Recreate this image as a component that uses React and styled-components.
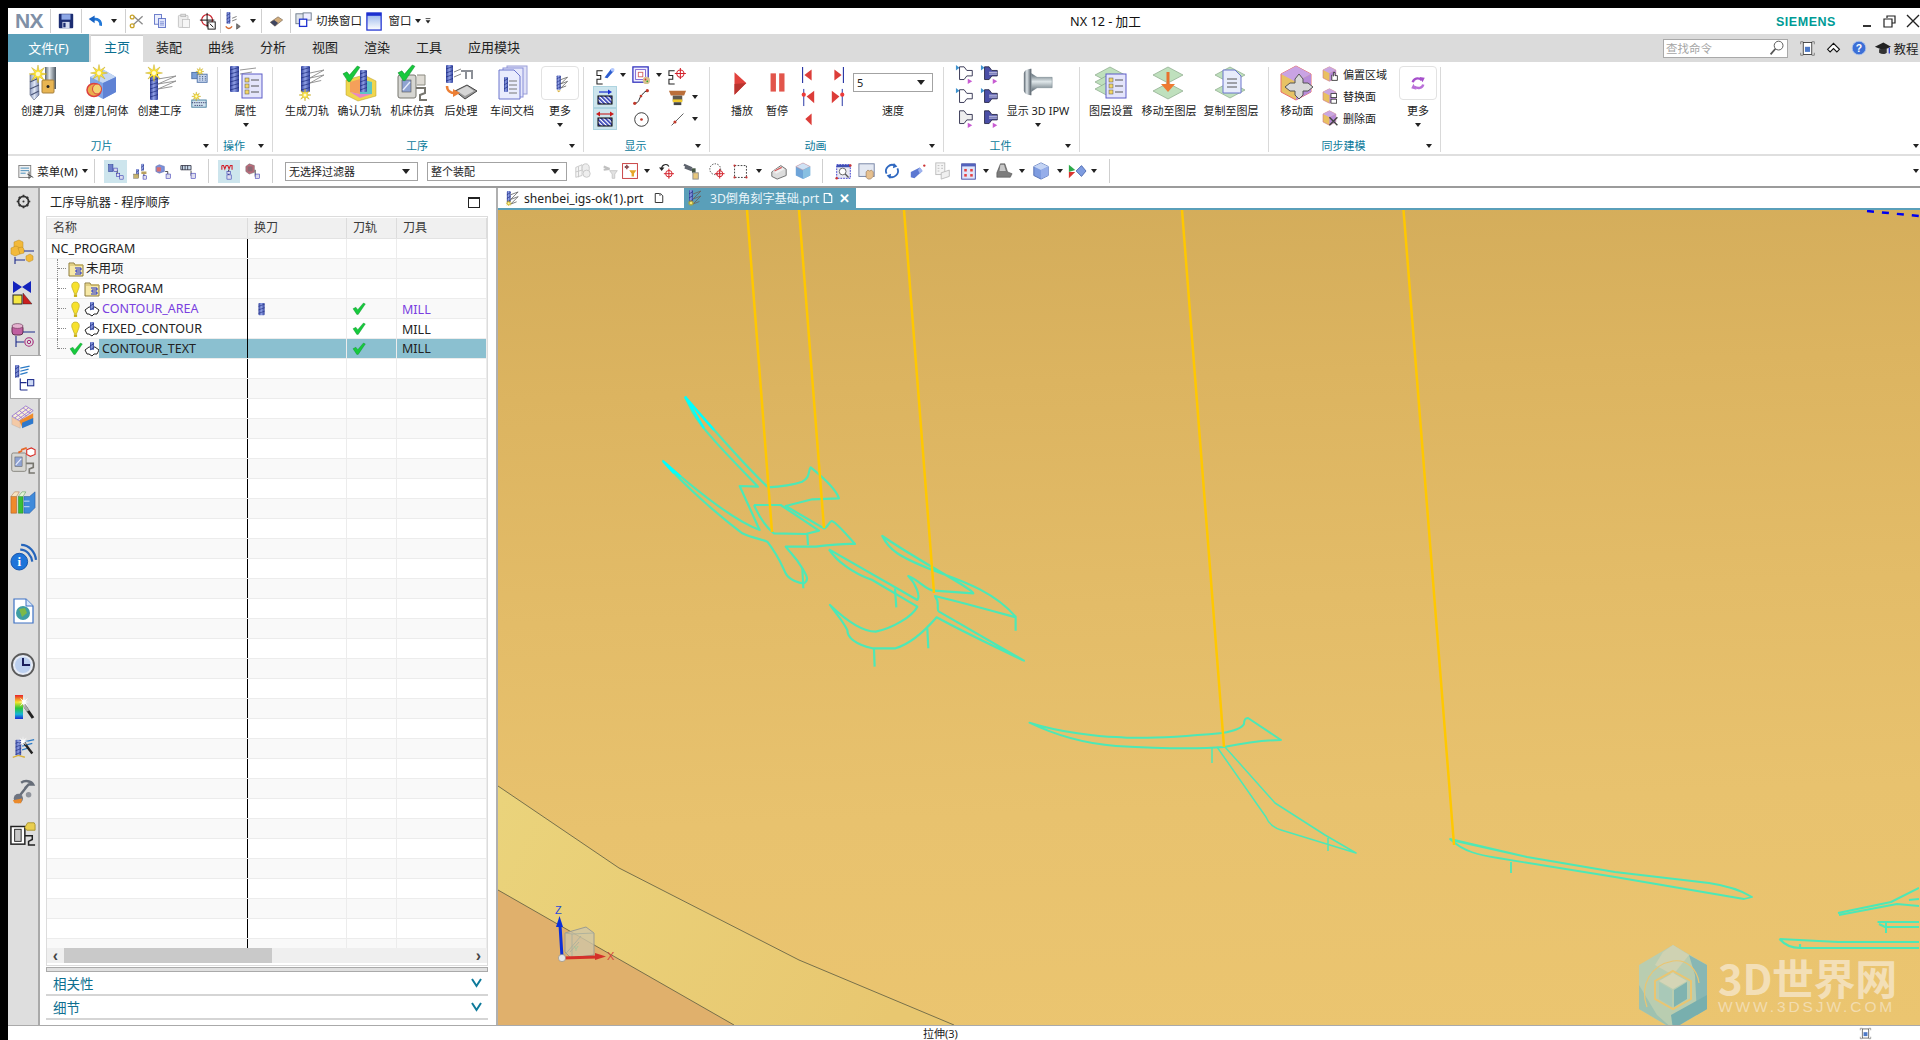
import React from 'react';
import styled, { createGlobalStyle } from 'styled-components';

const FONT = '"Noto Sans", "Noto Sans CJK SC", sans-serif';

const Global = createGlobalStyle`
  html, body { margin: 0; padding: 0; background: #000; }
  * { box-sizing: border-box; }
  #root { width: 1920px; height: 1040px; overflow: hidden; }
`;

/* ---------- drawing helpers ---------- */
const starPts = (cx, cy, R, r, n = 8) =>
  Array.from({ length: n * 2 }, (_, i) => {
    const a = (Math.PI * i) / n - Math.PI / 2;
    const q = i % 2 ? r : R;
    return `${(cx + q * Math.cos(a)).toFixed(1)},${(cy + q * Math.sin(a)).toFixed(1)}`;
  }).join(' ');
const Star = ({ x, y, R = 8 }) => (
  <g>
    <polygon points={starPts(x, y, R, R * 0.36)} fill="#ffe63a" stroke="#b59a10" strokeWidth=".4" />
    <circle cx={x} cy={y} r={R * 0.25} fill="#fffbd0" />
  </g>
);
const Mill = ({ x, y, w = 8, h = 26 }) => (
  <g>
    <rect x={x} y={y} width={w} height={h} rx="1" fill="url(#gMill)" />
    {Array.from({ length: Math.floor(h / 4) }, (_, i) => (
      <path key={i} d={`M${x} ${y + 4 + i * 4}L${x + w} ${y + 1.5 + i * 4}`} stroke="#1b2a7c" strokeWidth=".9" opacity=".75" />
    ))}
  </g>
);
const Check = ({ x, y, s = 1 }) => (
  <path transform={`translate(${x} ${y}) scale(${s})`} d="M0 6L3 4.5L5 7L11 0L13 1L5.5 12L4 12Z" fill="#17c93d" stroke="#0b8a2a" strokeWidth=".4" />
);
const Fan = ({ x, y, l = 14, c = '#8b8b8b' }) => (
  <path d={`M${x} ${y}L${x + l} ${y - 3}M${x} ${y + 5}L${x + l} ${y + 2}M${x} ${y + 10}L${x + l * 0.8} ${y + 7.5}M${x + l} ${y - 3}L${x} ${y + 5}M${x + l} ${y + 2}L${x} ${y + 10}`} stroke={c} strokeWidth=".9" fill="none" />
);
const Mini = ({ x = 0, y = 0, s = 1 }) => (
  <g transform={`translate(${x} ${y}) scale(${s})`}>
    <polygon points="8,0 16,4 16,14 8,18 0,14 0,4" fill="#e9c061" stroke="#c9708a" strokeWidth=".7" />
    <polygon points="8,0 16,4 8,8 0,4" fill="#c9a6e2" />
    <polygon points="8,8 16,4 16,14 8,18" fill="#b78ad8" />
  </g>
);
const Cup = ({ x = 0, y = 0, fill = '#fff', left, right }) => (
  <g transform={`translate(${x} ${y})`}>
    {left && <polygon points="0,0 4,3 0,6" fill="#3f93cf" />}
    <path d="M4 2H9L12 6H18V12H12L9 16H4Z" fill={fill} stroke="#2d2d4c" strokeWidth="1" />
    {fill !== '#fff' && fill !== '#eee' && <path d="M9 8H18M9 10H18" stroke="#fff" strokeWidth=".8" />}
    {right && <polygon points="13,15 18,18 13,21" fill="#c75bd1" />}
  </g>
);
const Xi = ({ x = 0, y = 4 }) => (
  <path transform={`translate(${x} ${y})`} d="M7 1H1V6H5V10H1V15H7" fill="none" stroke="#222" strokeWidth="1.1" />
);
const Cross = ({ x, y, r = 4.5 }) => (
  <g stroke="#d3202a" strokeWidth="1.1" fill="none">
    <circle cx={x} cy={y} r={r} />
    <path d={`M${x - r - 2} ${y}H${x + r + 2}M${x} ${y - r - 2}V${y + r + 2}`} />
  </g>
);
const Machine = ({ x = 0, y = 0, s = 1 }) => (
  <g transform={`translate(${x} ${y}) scale(${s})`}>
    <rect x="1" y="4" width="18" height="23" rx="2" fill="#d6d6d2" stroke="#77766f" />
    <rect x="5" y="9" width="9" height="12" fill="#8fa3d2" stroke="#555" strokeWidth=".6" />
    <path d="M6 19L13 11" stroke="#e8eefc" strokeWidth="1.4" />
    <path d="M19 17H28V22L23 24V29H30" fill="none" stroke="#77766f" strokeWidth="2" />
  </g>
);
const Plane = ({ y = 0, c = '#bfe0bd' }) => (
  <polygon points={`2,${y + 8} 17,${y} 32,${y + 8} 17,${y + 16}`} fill={c} stroke="#8aa88a" strokeWidth=".7" />
);

const G = (vb, el) => ({ vb, el });
const glyphs = {
  /* quick access */
  save: G(20, <><rect x="2" y="2" width="16" height="16" rx="1" fill="#1c2d72" /><rect x="5" y="2.5" width="10" height="6" fill="#8ea8e6" /><rect x="6" y="11" width="8" height="7" fill="#d4dcf0" /><rect x="7" y="12" width="2.5" height="5" fill="#1c2d72" /></>),
  undo: G(20, <><path d="M16 15C17 9 12 5.5 6 8" fill="none" stroke="#2278d8" strokeWidth="3.2" /><polygon points="2,7 9,3 9,12" fill="#1763c4" /></>),
  cut: G(20, <><path d="M5 15L17 4M6 4L17 14" stroke="#8a8a8a" strokeWidth="1.6" /><circle cx="4" cy="16" r="2.4" fill="none" stroke="#c9a328" strokeWidth="1.6" /><circle cx="5" cy="8" r="2.4" fill="none" stroke="#c9a328" strokeWidth="1.6" transform="translate(-1 -3)" /></>),
  copy: G(20, <><rect x="3" y="2" width="9" height="12" fill="#eaeefc" stroke="#4e63c0" /><rect x="8" y="7" width="9" height="11" fill="#dfe5fb" stroke="#4e63c0" /><path d="M10 11H15M10 13H15M10 15H15" stroke="#4e63c0" strokeWidth=".7" /></>),
  paste: G(20, <><rect x="3" y="3" width="12" height="15" rx="1" fill="#eee" stroke="#bbb" /><rect x="6" y="1.5" width="6" height="3" fill="#ddd" stroke="#bbb" /><rect x="8" y="8" width="9" height="10" fill="#f6f6f6" stroke="#c2c2c2" /></>),
  snap: G(20, <><circle cx="9" cy="9" r="6" fill="none" stroke="#c81e28" strokeWidth="1.3" /><path d="M1 9H17M9 1V17" stroke="#111" strokeWidth="1.1" /><rect x="10" y="11" width="8" height="8" fill="#fff" stroke="#000" /><path d="M12 13L16 17" stroke="#000" /></>),
  tool: G(22, <><Mill x={4} y={1} w={4} h={13} /><path d="M10 8L15 6M10 11L15 9M15 14L19 17L15 20Z" stroke="#555" fill="#777" strokeWidth=".8" /><path d="M3 17C5 20 8 20 10 17" stroke="#d5662a" strokeWidth="1.4" fill="none" /></>),
  erase: G(22, <><polygon points="3,12 13,5 19,9 9,17" fill="#d2ac7a" stroke="#8a7a68" /><polygon points="3,12 8,9 13,13 9,17" fill="#3f4560" /></>),
  switchWin: G(20, <><rect x="1" y="2" width="11" height="11" fill="#dfe3e9" stroke="#6a7888" /><rect x="9" y="1" width="9" height="8" fill="#eef" stroke="#6a7888" /><rect x="5" y="8" width="8" height="8" fill="#fff" stroke="#1c2fd0" strokeWidth="1.4" /></>),
  win: G(20, <><rect x="2" y="1" width="15" height="18" fill="url(#gWin)" stroke="#1c2fd0" strokeWidth="1.3" /><rect x="2" y="1" width="15" height="3" fill="#1c2fd0" /></>),
  mini: G(10, <><path d="M2 2H8" stroke="#222" /><polygon points="2,4 8,4 5,8" fill="#222" /></>),
  /* top right */
  mag: G(20, <><circle cx="12" cy="7" r="5.5" fill="#fff" stroke="#555" strokeWidth="1.2" /><path d="M8 11L2 18" stroke="#555" strokeWidth="2.2" /></>),
  screen: G(20, <><path d="M2 5V2H5M15 2H18V5M2 15V18H5M15 18H18V15" stroke="#777" fill="none" /><rect x="5" y="3" width="10" height="14" fill="#fff" stroke="#333" /><rect x="7" y="8" width="6" height="6" fill="#4d79c7" /></>),
  chev: G(20, <><path d="M3 11L10 4L17 11L14 14L10 10L6 14Z" fill="#fff" stroke="#111" strokeWidth="1.3" /></>),
  help: G(20, <><circle cx="10" cy="10" r="8.5" fill="#3c6fd6" stroke="#aac3ef" /><text x="10" y="15" textAnchor="middle" fontSize="13" fontWeight="700" fontFamily="Liberation Sans" fill="#fff">?</text></>),
  cap: G(20, <><polygon points="1,8 11,3 20,8 11,12" fill="#222" /><path d="M6 11V15C9 17 13 17 15 15V10" fill="#333" /><path d="M18 9V16" stroke="#1c2fd0" strokeWidth="1.4" /></>),
  /* ribbon big */
  createTool: G(36, <><path d="M5 10L13 8L14 30L9 35L5 30Z" fill="url(#gDrill)" stroke="#56607a" strokeWidth=".6" /><path d="M5 17L14 13M5 24L14 20M6 30L14 26" stroke="#4b5677" strokeWidth="1.2" /><rect x="20" y="2" width="11" height="22" fill="url(#gSteel)" /><rect x="17" y="15" width="12" height="13" rx="1" fill="#e8b553" stroke="#a7803c" /><circle cx="23" cy="21.5" r="1.5" fill="#222" /><Star x={13} y={9} R={9} /></>),
  createGeom: G(36, <><polygon points="7,12 21,5 33,12 33,27 20,34 7,27" fill="#7fa5e6" /><polygon points="7,12 21,5 33,12 20,18" fill="#c5d7f3" /><polygon points="20,18 33,12 33,27 20,34" fill="#5f82d4" /><ellipse cx="11" cy="25" rx="7" ry="6.5" fill="#e9ad4c" stroke="#dd3f3f" strokeWidth="1.5" /><ellipse cx="14" cy="24" rx="4.5" ry="5" fill="#f3d372" stroke="#dd3f3f" strokeWidth="1" /><Star x={16} y={8} R={8.5} /></>),
  createOp: G(36, <><Mill x={8} y={8} w={8} h={27} /><Fan x={16} y={14} l={18} /><Star x={12} y={8} R={8.5} /></>),
  attr: G(36, <><Mill x={2} y={1} w={9} h={26} /><path d="M12 5L28 3M12 9L24 7" stroke="#999" /><rect x="14" y="9" width="20" height="24" fill="#e4e5fb" stroke="#5d5dc7" /><g fill="#f2d564" stroke="#555" strokeWidth=".5"><rect x="17" y="13" width="4" height="4" /><rect x="17" y="19" width="4" height="4" /><rect x="17" y="25" width="4" height="4" /></g><path d="M23 15H31M23 21H31M23 27H31" stroke="#555" strokeWidth="1" /></>),
  genPath: G(36, <><Mill x={12} y={1} w={9} h={26} /><Fan x={21} y={8} l={14} /><Star x={16} y={30} R={6} /></>),
  verify: G(36, <><polygon points="4,15 22,10 34,16 34,31 16,36 4,30" fill="#f0d64e" stroke="#b69a2a" strokeWidth=".5" /><polygon points="8,17 18,14 18,29 8,27" fill="#f5a05a" /><polygon points="18,14 30,17 30,29 18,29" fill="#5cc4c4" /><polygon points="8,27 18,29 30,29 18,33" fill="#e886c6" /><Mill x={18} y={5} w={7} h={22} /><Check x={1} y={1} s={1.3} /></>),
  simulate: G(36, <><Machine x={2} y={6} s={1} /><path d="M22 10H30V20H22" fill="#dedbd4" stroke="#8a8a80" /><Check x={3} y={0} s={1.3} /></>),
  post: G(36, <><Mill x={3} y={0} w={7} h={18} /><path d="M11 7L18 4M11 12L18 9" stroke="#888" /><path d="M18 6H30M23 6V14M29 6V14" stroke="#8b8f96" strokeWidth="2" /><polygon points="12,26 24,20 34,26 22,34" fill="#999" stroke="#444" /><polygon points="14,26 24,21 31,26 22,31" fill="#d6d6d6" /><path d="M4 21C4 26 8 28 12 28" stroke="#ec7f35" strokeWidth="2.5" fill="none" /><polygon points="10,24 17,28 10,32" fill="#ec7f35" /></>),
  shop: G(36, <><rect x="13" y="1" width="20" height="28" fill="#dfe1f7" stroke="#9a9ed8" /><rect x="9" y="3" width="20" height="29" fill="#e6e8fb" stroke="#8a90d8" /><path d="M5 5H20L26 11V34H5Z" fill="#e9ecfd" stroke="#6a74cc" /><Mill x={10} y={12} w={4} h={15} /><path d="M15 16H23M15 20H23M15 24H23M15 28H23" stroke="#777" /></>),
  more: G(24, <><Mill x={8} y={3} w={5} h={17} /><path d="M8 21L13 21L10.5 23Z" fill="#d9b13b" /><Fan x={13} y={8} l={8} c="#555" /></>),
  /* small ribbon */
  sGrid: G(20, <><rect x="2" y="6" width="7" height="7" fill="#7ba0d8" stroke="#4c70a8" /><rect x="8" y="8" width="11" height="9" fill="#c7d5ee" stroke="#4c70a8" /><path d="M11 10V15M14 10V15M17 10V15" stroke="#23426e" strokeDasharray="1 1" /><Star x={11} y={5} R={4.5} /></>),
  sPlate: G(20, <><rect x="2" y="10" width="16" height="8" fill="#cfe2ee" stroke="#447d9e" /><path d="M2 13H18M5 16H15" stroke="#336" strokeDasharray="1.5 1" /><Star x={7} y={6} R={5} /></>),
  dispTool: G(20, <><Xi /><path d="M9 12L16 3L19 5L12 13Z" fill="#2c5dd0" /><circle cx="17.5" cy="4" r="2" fill="#b3c9ff" /></>),
  dispLayer: G(20, <><rect x="1" y="1" width="17" height="17" fill="#eef" stroke="#2f2fbd" strokeWidth="1.4" /><rect x="4" y="4" width="11" height="11" fill="#fff" stroke="#7a5ed0" /><rect x="7" y="7" width="5" height="5" fill="none" stroke="#d15e5e" /><circle cx="16" cy="16" r="4" fill="#d9c28f" /><circle cx="15" cy="15" r="1" fill="#d33" /><circle cx="17" cy="17" r="1" fill="#3a3" /></>),
  dispCross: G(20, <><Xi /><Cross x={13} y={8} r={3.8} /></>),
  hatchA: G(20, <><path d="M4 5H15" stroke="#1a2ed0" strokeWidth="1.2" /><polygon points="13,2.5 17,5 13,7.5" fill="#1a2ed0" /><rect x="3" y="9" width="14" height="8" fill="url(#hatch)" stroke="#000" /></>),
  hatchB: G(20, <><path d="M3 5H17" stroke="#c81e1e" strokeWidth="1.1" /><polygon points="5,2.5 1,5 5,7.5" fill="#c81e1e" /><polygon points="15,2.5 19,5 15,7.5" fill="#c81e1e" /><rect x="3" y="9" width="14" height="8" fill="url(#hatch)" stroke="#000" /></>),
  curve: G(20, <><path d="M3 17C8 17 8 11 10 9C12 7 13 4 17 3" stroke="#222" fill="none" strokeWidth="1.1" /><circle cx="3" cy="17" r="1.8" fill="#c0392b" /><circle cx="17" cy="3" r="1.8" fill="#c0392b" /><circle cx="10" cy="9" r="1.5" fill="#c0392b" /></>),
  circle: G(20, <><circle cx="10" cy="10" r="8" fill="#fff" stroke="#333" strokeWidth="1.1" /><circle cx="10" cy="10" r="1.6" fill="#c0392b" /></>),
  line: G(20, <><path d="M3 17L17 3" stroke="#333" strokeWidth=".9" /><circle cx="7" cy="13" r="1.8" fill="#c0392b" /></>),
  holder: G(20, <><path d="M1 3H19L17 8H3Z" fill="#bb6f3a" /><rect x="5" y="8" width="10" height="6" fill="#5f5a50" /><rect x="5" y="12" width="10" height="3" fill="#f0c92c" /><rect x="6" y="15" width="8" height="3" fill="#444" /></>),
  play: G(28, <><polygon points="7,4 18,14 7,25" fill="#e1413c" /><polygon points="7,15 18,14 7,25" fill="#b9342f" /></>),
  pause: G(28, <><rect x="8" y="5" width="5" height="17" fill="#e2554b" /><rect x="16" y="5" width="5" height="17" fill="#e2554b" /></>),
  prevBar: G(20, <><path d="M4 1V19" stroke="#1f2da0" strokeWidth="1.2" /><polygon points="14,4 6,10 14,16" fill="#dc3d39" /></>),
  nextBar: G(20, <><path d="M16 1V19" stroke="#1f2da0" strokeWidth="1.2" /><polygon points="6,4 14,10 6,16" fill="#dc3d39" /></>),
  prevDot: G(20, <><path d="M5 1V19" stroke="#1f2da0" /><circle cx="5" cy="7" r="2.2" fill="#ee3b38" /><polygon points="16,3 8,9 16,16" fill="#dc3d39" /></>),
  nextDot: G(20, <><path d="M15 1V19" stroke="#1f2da0" /><circle cx="15" cy="7" r="2.2" fill="#ee3b38" /><polygon points="4,3 12,9 4,16" fill="#dc3d39" /></>),
  prev: G(20, <polygon points="14,4 7,10 14,17" fill="#dc3d39" />),
  cupLB: G(22, <Cup x={1} y={0} left right />), cupNLB: G(22, <Cup x={1} y={0} fill="#4a4ea6" left right />),
  cupL: G(22, <Cup x={1} y={1} left />), cupNL: G(22, <Cup x={1} y={1} fill="#4a4ea6" left />),
  cupB: G(22, <Cup x={1} y={0} fill="#eee" right />), cupNB: G(22, <Cup x={1} y={0} fill="#4a4ea6" right />),
  ipw: G(36, <><path d="M3 8C3 4 9 3 11 3V31C9 31 3 30 3 26Z" fill="url(#gSteel)" /><path d="M11 8L17 12H33V23H17L11 27Z" fill="url(#gSteelV)" stroke="#6d7e88" strokeWidth=".5" /></>),
  layerSet: G(36, <><Plane y={2} /><Plane y={9} /><Plane y={16} /><rect x="13" y="9" width="20" height="24" fill="#e4e5fb" stroke="#5d5dc7" /><g fill="#f2d564" stroke="#555" strokeWidth=".5"><rect x="16" y="13" width="4" height="4" /><rect x="16" y="19" width="4" height="4" /><rect x="16" y="25" width="4" height="4" /></g><path d="M22 15H30M22 21H30M22 27H30" stroke="#555" /></>),
  layerMove: G(36, <><Plane y={2} /><Plane y={18} /><path d="M17 7V22" stroke="#e8722d" strokeWidth="3" /><polygon points="10,19 24,19 17,27" fill="#ee7a32" /></>),
  layerCopy: G(36, <><Plane y={2} /><Plane y={17} /><path d="M10 5H22L28 11V28H10Z" fill="#e7ecfb" stroke="#6a74cc" /><path d="M14 14H24M14 18H24M14 22H24" stroke="#555" /></>),
  moveFace: G(36, <><polygon points="17,1 32,9 32,27 17,35 2,27 2,9" fill="#e7c265" stroke="#ea6d6d" /><polygon points="17,1 32,9 17,17 2,9" fill="#c9a3e3" /><polygon points="17,17 32,9 32,27 17,35" fill="#b78cd8" /><path d="M21 12L25 17V21H30L35 25L30 29H25V33L21 37L17 33V29H12L7 25L12 21H17V17Z" fill="#d9d9d9" stroke="#555" transform="translate(-1 -3)" /></>),
  offset: G(20, <><Mini x={0} y={1} /><path d="M11 11V18H18V12H15V8H13V13" fill="#fff" stroke="#222" /></>),
  replace: G(20, <><Mini x={0} y={1} /><rect x="10" y="7" width="7" height="5" fill="#fff" stroke="#333" /><rect x="10" y="14" width="7" height="5" fill="#fff" stroke="#333" /></>),
  deleteF: G(20, <><Mini x={0} y={1} /><path d="M8 9L18 19M18 9L8 19" stroke="#444" strokeWidth="1.8" /></>),
  morePurple: G(24, <><path d="M5 11C6 6 12 4 17 8" fill="none" stroke="#a64fcb" strokeWidth="3.2" /><polygon points="14,4 21,5 18,11" fill="#a64fcb" /><path d="M19 14C18 19 12 20 7 17" fill="none" stroke="#b96fd8" strokeWidth="3.2" /><polygon points="10,21 3,19 6,13" fill="#b96fd8" /></>),
  /* toolbar */
  menu: G(20, <><rect x="1" y="3" width="14" height="14" fill="#f2f2f2" stroke="#777" /><path d="M3 6H13M3 9H13M3 12H9" stroke="#2f7db0" /><path d="M11 13L18 17M13 10V19" stroke="#333" /></>),
  tvA: G(20, <><rect x="2" y="2" width="5" height="8" fill="#6f80c9" stroke="#1c2f90" strokeWidth=".6" /><path d="M8 9H12M12 9V15" stroke="#333" /><rect x="8" y="6" width="4" height="4" fill="#dde" stroke="#22a" strokeWidth=".6" /><rect x="11" y="12" width="4" height="4" fill="#dde" stroke="#22a" strokeWidth=".6" /><rect x="15" y="15" width="4" height="4" fill="#dde" stroke="#22a" strokeWidth=".6" /></>),
  tvB: G(20, <><Mill x={11} y={1} w={3} h={8} /><Mill x={5} y={7} w={3} h={9} /><rect x="11" y="10" width="6" height="3" fill="#b9a15f" /><rect x="2" y="13" width="6" height="5" fill="#c7b36e" stroke="#444" strokeWidth=".4" /><path d="M14 13V18" stroke="#224" /><rect x="13" y="15" width="4" height="4" fill="#dde" stroke="#22a" strokeWidth=".6" /></>),
  tvC: G(20, <><polygon points="5,2 11,4 11,10 5,12 1,10 1,4" fill="#7d90d8" stroke="#3c52a0" strokeWidth=".5" /><rect x="2" y="5" width="5" height="5" fill="#d87070" /><path d="M12 10H15V13" stroke="#333" fill="none" /><rect x="13" y="13" width="5" height="5" fill="#dde" stroke="#22a" strokeWidth=".6" /></>),
  tvD: G(20, <><path d="M1 3H13M1 3V8H13V3M3 3V8M6 3V8M9 3V8" stroke="#223" fill="#cde" strokeWidth=".9" /><path d="M13 9V15H16" stroke="#333" fill="none" /><rect x="13" y="12" width="5" height="6" fill="#dde" stroke="#22a" strokeWidth=".6" /></>),
  tvE: G(20, <><path d="M1 3V8M1 3H3L4.5 7L6 3H8L9.5 7L11 3H13V8" stroke="#d3202a" strokeWidth="1.3" fill="none" /><path d="M9 8V16" stroke="#222" /><rect x="7" y="10" width="4" height="3" fill="#dde" stroke="#22a" strokeWidth=".6" /><rect x="7" y="14" width="5" height="5" fill="#dde" stroke="#22a" strokeWidth=".6" /></>),
  tvF: G(20, <><polygon points="5,1 11,3 11,11 5,13 1,10 1,4" fill="#c06a7a" stroke="#666" strokeWidth=".6" /><rect x="3" y="4" width="6" height="6" fill="#8c6a74" /><path d="M12 8V16" stroke="#333" /><rect x="12" y="13" width="5" height="5" fill="#dde" stroke="#22a" strokeWidth=".6" /></>),
  gA: G(20, <><polygon points="2,6 9,3 9,15 2,17" fill="#f5f5f5" stroke="#c6c6c6" /><path d="M2 11L9 9M5 5V17" stroke="#c6c6c6" /><ellipse cx="13" cy="7" rx="4" ry="5" fill="#ededed" stroke="#c6c6c6" /><ellipse cx="14" cy="13" rx="4" ry="4" fill="#eee" stroke="#c6c6c6" /></>),
  gB: G(20, <><path d="M2 4L9 7M2 8L9 7" stroke="#c0c0c0" strokeWidth="2.5" /><polygon points="9,9 18,9 15,13 15,18 12,18 12,13" fill="#e2e2e2" stroke="#c4c4c4" /></>),
  filterBox: G(20, <><rect x=".7" y=".7" width="18.6" height="18.6" fill="#fff" stroke="#c94141" strokeWidth="1.2" /><path d="M6 2V8M3 5H9" stroke="#d3202a" /><circle cx="6" cy="5" r="1.6" fill="none" stroke="#333" /><polygon points="9,9 18,9 15,13 15,17 12,17 12,13" fill="#e6a72a" /></>),
  cUndo: G(20, <><path d="M3 7C3 3 9 1 11 5" stroke="#222" fill="none" strokeWidth="1.2" /><polygon points="0,6 6,6 3,10" fill="#222" /><Cross x={11} y={13} r={3.6} /></>),
  cTool: G(20, <><path d="M1 3L10 7M2 6L10 9" stroke="#5e646e" strokeWidth="2.6" /><rect x="10" y="7" width="4" height="5" fill="#454" /><rect x="11" y="12" width="6" height="7" fill="#e8c77c" stroke="#8d8d8d" /></>),
  cDots: G(20, <><circle cx="8" cy="8" r="6" fill="#fff" stroke="#333" strokeDasharray="1.5 1.5" /><Cross x={13} y={13} r={3.4} /></>),
  cRect: G(20, <><rect x="3" y="3" width="14" height="14" fill="none" stroke="#222" strokeDasharray="2 1.6" /><circle cx="3" cy="3" r="1.3" fill="#c33" /><circle cx="17" cy="17" r="1.3" fill="#c33" /><circle cx="3" cy="17" r="1.3" fill="#c33" /></>),
  cWrap: G(20, <><polygon points="2,11 12,4 18,8 18,15 8,19 2,16" fill="#dcdcdc" stroke="#666" /><polygon points="3,10 12,5 16,8 7,13" fill="#f0f0f0" /><path d="M5 10L13 6" stroke="#d35a5a" strokeWidth="1.4" /></>),
  cCube: G(20, <><polygon points="10,1 18,5 18,15 10,19 2,15 2,5" fill="#6ea4d8" /><polygon points="10,1 18,5 10,9 2,5" fill="#cfe2f5" stroke="#d88" strokeWidth=".5" /><polygon points="10,9 18,5 18,15 10,19" fill="#88c0e2" /></>),
  vFit: G(20, <><rect x="2" y="2" width="16" height="16" fill="#e8e8f2" stroke="#2222c8" strokeDasharray="2 1.2" /><rect x="2" y="2" width="16" height="3" fill="#3f4fb4" /><circle cx="9" cy="10" r="4" fill="#fff" stroke="#555" /><path d="M12 13L16 17" stroke="#555" strokeWidth="1.5" /><circle cx="2" cy="18" r="1.5" fill="#c33" /><circle cx="18" cy="3" r="1.5" fill="#c33" /></>),
  vPan: G(20, <><rect x="1" y="2" width="17" height="14" fill="#e3e8f2" stroke="#6f7da0" /><path d="M9 17V11L11 9L13 10L15 9L17 11V16L14 19H11Z" fill="#e6c08e" stroke="#87694a" strokeWidth=".6" /></>),
  vRot: G(20, <><path d="M4 13C1 7 8 1 13 4" stroke="#2f68c0" strokeWidth="2" fill="none" /><path d="M16 7C19 13 12 19 7 16" stroke="#2f68c0" strokeWidth="2" fill="none" /><polygon points="12,1 16,5 11,7" fill="#2f68c0" /><polygon points="8,19 4,15 9,13" fill="#2f68c0" /></>),
  vZoom: G(20, <><polygon points="2,11 12,6 15,10 6,18 2,17" fill="#5c78d2" /><polygon points="12,6 15,10 12,13 10,9" fill="#9fb3ee" /><circle cx="17" cy="4" r="1.3" fill="#c33" /></>),
  vDim: G(20, <><rect x="2" y="1" width="10" height="13" fill="#f4f4f4" stroke="#bbb" /><path d="M4 4H6M8 4H10M4 7H6M8 7H10M4 10H6" stroke="#bbb" /><polygon points="8,12 17,9 17,16 8,19" fill="#f0f0f0" stroke="#bbb" /></>),
  vGrid: G(20, <><rect x="2" y="1" width="16" height="18" fill="#dfe6fb" stroke="#333c9a" /><rect x="2" y="1" width="16" height="3" fill="#5362bd" /><g fill="#e54040"><rect x="5" y="7" width="3" height="3" /><rect x="12" y="7" width="3" height="3" /><rect x="5" y="13" width="3" height="3" /><rect x="12" y="13" width="3" height="3" /></g></>),
  vShade: G(20, <><polygon points="6,2 11,2 14,11 19,13 17,17 2,17 2,12" fill="#7c7c7c" stroke="#333" strokeWidth=".5" /><polygon points="6,3 10,3 12,10 5,10" fill="#c8c8c8" /></>),
  vBlue: G(20, <><polygon points="10,1 18,5 18,15 10,19 2,15 2,5" fill="#7e9ce0" stroke="#4e6bb0" /><polygon points="10,1 18,5 10,9 2,5" fill="#c4d4f4" /><polygon points="10,9 18,5 18,15 10,19" fill="#96aeea" /></>),
  vSec: G(20, <><polygon points="9,10 15,4 20,10 15,16" fill="#7e9ce0" stroke="#4e6bb0" /><polygon points="1,3 8,9 1,11" fill="#2daa4a" /><polygon points="1,11 8,11 1,18" fill="#d9342f" /></>),
  /* doc tabs */
  docTab: G(16, <><path d="M3 2H10L13 5V14H3Z" fill="#fff" stroke="#333" strokeWidth="1.3" /><path d="M8 2H11V5H8Z" fill="#999" /></>),
  docTabW: G(16, <><path d="M3 2H10L13 5V14H3Z" fill="none" stroke="#fff" strokeWidth="1.5" /><path d="M9 2H12V5H9Z" fill="#fff" /></>),
  partIcon: G(16, <><Mill x={2} y={0} w={4} h={12} /><Fan x={6} y={4} l={8} c="#666" /><Star x={4} y={13} R={3} /></>),
  /* tree */
  folder: G(16, <><path d="M1 2H6L7 4H15V15H1Z" fill="#f7e9a8" stroke="#8e7c3c" /><path d="M1 4H15" stroke="#cbb561" /><path d="M7 7H13V9H8V11H13V13H7" fill="none" stroke="#1c2fd0" strokeWidth="1" /></>),
  bulb: G(16, <><path d="M8 1C4 1 4 5 5 7L7 12H9L11 7C12 5 12 1 8 1Z" fill="#f7e12d" stroke="#b7a316" strokeWidth=".6" /><rect x="6.5" y="12.5" width="3" height="2.5" fill="#c9b117" /></>),
  opIcon: G(16, <><path d="M1 9L5 6H11L15 9L13 13H10L8 15L5 13H3Z" fill="#fff" stroke="#222" /><Mill x={6} y={1} w={4} h={8} /></>),
  greenCheck: G(14, <Check x={1} y={1} s={.95} />),
  chgTool: G(16, <Mill x={4} y={1} w={7} h={14} />),
  /* sidebar */
  gear: G(20, <><circle cx="10" cy="10" r="6" fill="none" stroke="#333" strokeWidth="2" /><path d="M10 2V5M10 15V18M2 10H5M15 10H18M4.5 4.5L6.5 6.5M13.5 13.5L15.5 15.5M15.5 4.5L13.5 6.5M4.5 15.5L6.5 13.5" stroke="#333" strokeWidth="2" /><circle cx="10" cy="10" r="1.2" fill="#333" /></>),
  sGeom: G(26, <><g fill="#f2b93a" stroke="#b98a22" strokeWidth=".5"><polygon points="4,3 9,1 13,3 13,9 8,11 4,9" /><polygon points="1,9 6,7 10,9 10,15 5,17 1,15" /><polygon points="8,9 12,8 14,10 14,14 10,15" /><polygon points="16,17 20,15 23,17 23,21 19,23 16,21" /></g><path d="M14 12H24M5 18V25M5 21H15" stroke="#1c2a8a" strokeWidth="1.1" fill="none" /></>),
  sMirror: G(26, <><polygon points="3,1 12,7 21,1 21,13 12,7 3,13" fill="#1323bd" /><rect x="3" y="15" width="9" height="9" fill="#f5e742" stroke="#222" /><polygon points="13,13 22,24 13,24" fill="#c91f1f" stroke="#222" strokeWidth=".4" /></>),
  sCyl: G(26, <><rect x="2" y="3" width="11" height="10" rx="3" fill="#c05fa0" stroke="#62304f" /><ellipse cx="7.5" cy="4" rx="5.5" ry="2.4" fill="#e5b3d0" stroke="#62304f" strokeWidth=".6" /><path d="M13 10H25M6 14V25M6 20H14" stroke="#1c2a8a" fill="none" strokeWidth="1.1" /><circle cx="19" cy="20" r="4.2" fill="none" stroke="#a52a7a" strokeWidth="1.1" /><circle cx="19" cy="20" r="1.7" fill="none" stroke="#a52a7a" /></>),
  sOps: G(26, <><Mill x={2} y={1} w={4} h={12} /><path d="M7 4L16 2M7 7L15 5M7 10L14 8" stroke="#2b7ac5" strokeWidth="1.2" /><path d="M7 14V25M7 18H13M7 25H14" stroke="#1c2a8a" fill="none" strokeWidth="1.1" /><rect x="14" y="15" width="6" height="6" fill="#cdd9f5" stroke="#1c2a8a" /></>),
  sTable: G(28, <><polygon points="2,12 17,1 25,6 10,17" fill="#f6f0d6" stroke="#9c7cd2" /><path d="M6 9L14 15M10 6L18 12M14 3L22 9M5 14L20 3M8 16L23 5" stroke="#a37bd8" /><polygon points="2,13 11,18 11,25 2,21" fill="#f4c9a6" stroke="#aaa" strokeWidth=".4" /><polygon points="10,17 25,9 25,19 13,24" fill="#ef8c2c" /><polygon points="13,19 25,14 25,20 13,25" fill="#2d78cc" /></>),
  sMach: G(28, <><Machine x={1} y={3} s={.86} /><path d="M12 3L18 1M9 6L13 4" stroke="#e66a28" strokeWidth="2" /><polygon points="18,3 23,1 27,3 27,8 22,10 18,8" fill="#fff" stroke="#d82e28" strokeWidth="1.2" /></>),
  sBooks: G(28, <><polygon points="1,7 1,25 7,25 7,7" fill="#ef8a2c" stroke="#9b4d12" strokeWidth=".5" /><polygon points="1,7 5,2 10,2 7,7" fill="#f7e4c2" stroke="#9b4d12" strokeWidth=".4" /><polygon points="9,7 9,25 14,25 14,7" fill="#39be35" stroke="#1c7a1c" strokeWidth=".5" /><polygon points="9,7 13,2 17,2 14,7" fill="#e4f4d8" stroke="#1c7a1c" strokeWidth=".4" /><polygon points="15,7 15,25 21,25 27,19 27,2 21,7" fill="#3f8ada" stroke="#1d4d96" strokeWidth=".5" /><path d="M15 12H21M15 18H21" stroke="#cfe3f8" /></>),
  sInfo: G(28, <><circle cx="10" cy="19" r="9" fill="#1e74d9" stroke="#0e4fa8" /><text x="10" y="24" textAnchor="middle" fontSize="14" fontWeight="700" fontFamily="Liberation Serif" fill="#fff">i</text><path d="M11 6C18 6 23 12 24 19M12 1C21 1 27 9 28 17" fill="none" stroke="#2565bb" strokeWidth="2.4" /></>),
  sDoc: G(26, <><path d="M4 1H16L23 8V25H4Z" fill="#fff" stroke="#3c71c4" strokeWidth="1.2" /><path d="M16 1V8H23" fill="#d7e6f8" stroke="#3c71c4" /><circle cx="13" cy="15" r="7" fill="#3f9da3" /><path d="M9 11L15 10L17 15L12 19Z" fill="#7cb948" /></>),
  sClock: G(26, <><circle cx="13" cy="13" r="11" fill="#e6ebf5" stroke="#5b5b5b" strokeWidth="1.8" /><circle cx="13" cy="13" r="8" fill="#bcd0ef" /><path d="M13 6V13H20" stroke="#1a1f5c" strokeWidth="2" fill="none" /></>),
  sRain: G(26, <><rect x="5" y="1" width="8" height="24" fill="url(#gRain)" /><path d="M14 11L23 24" stroke="#222" strokeWidth="3" /><path d="M14 11L18 17" stroke="#aaa" strokeWidth="3" /><polygon points={starPts(14, 8, 6, 1.6)} fill="#fff" /></>),
  sWand: G(28, <><Mill x={6} y={5} w={6} h={17} /><path d="M13 8L26 5M13 12L24 9M13 16L20 14" stroke="#2b7ac5" strokeWidth="1.4" /><path d="M15 8L24 20" stroke="#222" strokeWidth="2.6" /><polygon points={starPts(14, 7, 6, 1.6)} fill="#fff" /><path d="M3 24L9 22L16 24" stroke="#d9b13b" strokeWidth="1.5" fill="none" /></>),
  sWrench: G(28, <><path d="M8 21L19 7M12 4C16 1 23 2 25 6L20 6L16 10" stroke="#666d78" strokeWidth="2.6" fill="none" /><circle cx="9" cy="21" r="5" fill="#6e7480" /><path d="M3 23L13 21L12 26L5 26Z" fill="#ea8a2c" /><circle cx="20" cy="17" r="3" fill="#90949c" /></>),
  sMachF: G(28, <><rect x="1" y="7" width="15" height="19" fill="#fff" stroke="#222" strokeWidth="1.6" /><rect x="5" y="10" width="7" height="13" fill="#c8c8c8" stroke="#222" /><path d="M16 17H24V21L20 23V27H27" fill="none" stroke="#222" strokeWidth="1.6" /><path d="M16 8L19 3H26L27 5V11H18Z" fill="#e9ce4f" stroke="#a99430" /></>),
};

/* ---------- styled parts ---------- */
const Page = styled.div`
  width: 1920px; height: 1040px; padding: 8px 0 0 8px; background: #000;
  font-family: ${FONT}; color: #222; font-size: 11px; overflow: hidden;
`;
const Shell = styled.div`
  width: 1912px; height: 1032px; background: #fff; display: flex; flex-direction: column; overflow: hidden;
`;
const Svg = styled.svg`display: block; flex: none; overflow: visible;`;
const Ico = ({ n, s = 20 }) => {
  const g = glyphs[n];
  return <Svg width={s} height={s} viewBox={`0 0 ${g.vb} ${g.vb}`}>{g.el}</Svg>;
};
const Caret = styled.span`
  display: block; flex: none; width: 0; height: 0;
  border-left: ${p => p.$s || 3}px solid transparent;
  border-right: ${p => p.$s || 3}px solid transparent;
  border-top: ${p => (p.$s || 3) + 1}px solid ${p => p.$c || '#222'};
`;
const Slot = styled.div`
  flex: none; width: ${p => p.$w}px; height: 100%;
  margin-left: ${p => p.$m || 0}px;
  display: flex; align-items: center; justify-content: center;
  white-space: nowrap;
`;
const VSep = styled.div`
  flex: none; width: 1px; height: ${p => p.$h || 24}px; background: #cfcfcf;
  margin-left: ${p => p.$m || 0}px;
`;

const TitleBar = styled.div`height: 26px; display: flex; align-items: center; flex: none;`;
const NxMark = styled.span`font: 700 21px "Liberation Sans", sans-serif; color: #7f90a6; letter-spacing: -.5px;`;
const TitleQuick = styled.div`width: 1062px; height: 100%; display: flex; align-items: center; flex: none;`;
const QuickText = styled.span`font-size: 11.5px; color: #222; margin-top: -2px;`;
const AppTitle = styled.div`font-size: 12.7px; color: #111; white-space: nowrap; width: 74px; margin-top: -2px;`;
const Siemens = styled.div`
  margin-left: auto; font: 700 12.5px "Liberation Sans", sans-serif; color: #009b96; letter-spacing: .55px; margin-top: 1px;
`;
const WinBar = styled.div`width: 8px; height: 2px; background: #333; margin-top: 9px;`;
const WinCtl = styled.div`display: flex; align-items: center; height: 100%; margin-left: 20px; width: 64px; flex: none; overflow: hidden;`;

const TabBar = styled.div`height: 28px; background: #dbdbdb; display: flex; flex: none; align-items: flex-end;`;
const FileTab = styled.div`
  width: 81px; height: 28px; background: #5a9fb9; color: #fff; font-size: 13px; margin-right: 2px; padding-bottom: 2px;
  display: flex; align-items: center; justify-content: center;
`;
const Tab = styled.div`
  padding: 0 13px; height: 27px; font-size: 13px; line-height: 23px;
  color: ${p => (p.$on ? '#0a6f90' : '#222')}; background: ${p => (p.$on ? '#fff' : 'transparent')};
  border-top: ${p => (p.$on ? '1px solid #c9c9c9' : '1px solid transparent')};
`;
const TabRight = styled.div`margin-left: auto; height: 100%; display: flex; align-items: center;`;
const SearchBox = styled.div`
  width: 125px; height: 19px; background: #fff; border: 1px solid #a9a9a9; color: #a5a5a5; font-size: 11.5px;
  display: flex; align-items: center; justify-content: space-between; padding: 0 2px; margin-right: 6px;
`;
const HelpText = styled.span`font-size: 12.5px; color: #222; white-space: nowrap;`;

const Ribbon = styled.div`height: 94px; display: flex; padding-top: 5px; border-bottom: 2px solid #dfdfdf; flex: none;`;
const Group = styled.div`
  width: ${p => p.$w}px; height: 85px; flex: none; display: flex; flex-direction: column;
  border-right: 1px solid #d9d9d9;
`;
const GroupBody = styled.div`flex: 1; display: flex; padding-left: ${p => p.$p || 0}px; min-height: 0;`;
const GroupFoot = styled.div`height: 12px; display: flex; align-items: center; flex: none;`;
const GroupName = styled.div`flex: 1; text-align: center; color: #0b7a9b; font-size: 11px; line-height: 12px; white-space: nowrap;`;
const FootCaret = styled.div`width: 22px; display: flex; justify-content: center; align-items: center; flex: none;`;
const BigBtn = styled.div`
  width: ${p => p.$w}px; flex: none; display: flex; flex-direction: column; align-items: center;
`;
const BigIcon = styled.div`
  height: 32px; display: flex; align-items: center; justify-content: center;
`;
const MoreFrame = styled.div`
  width: 38px; height: 34px; margin-top: -1px; margin-bottom: -1px; border: 1px solid #e2e2e2; border-radius: 4px;
  display: flex; align-items: center; justify-content: center;
`;
const BigLabel = styled.div`
  margin-top: 5px; height: 14px; line-height: 14px; font-size: 11px; white-space: nowrap; color: #222;
  display: flex; justify-content: center; width: 100%;
`;
const BigCaret = styled.div`margin-top: 5px; display: flex; justify-content: center;`;
const SmallStack = styled.div`width: 20px; flex: none; display: flex; flex-direction: column; align-items: center; gap: 6px;`;
const SmallGrid = styled.div`
  display: grid; grid-template-columns: ${p => p.$cols}; grid-auto-rows: 22px; margin-top: -3px; height: 66px; flex: none;
  margin-left: ${p => p.$m || 0}px;
`;
const Cell = styled.div`
  display: flex; align-items: center; justify-content: center;
  background: ${p => (p.$on ? '#cde5ed' : 'transparent')};
  box-shadow: ${p => (p.$on ? 'inset 0 0 0 1px #aed4e0' : 'none')};
`;
const SpeedCol = styled.div`width: 80px; flex: none; display: flex; flex-direction: column; align-items: center;`;
const SelectBox = styled.div`
  width: ${p => p.$w}px; height: ${p => p.$h || 19}px; flex: none; border: 1px solid #a3a3a3; background: #fff; margin-left: ${p => p.$m || 0}px;
  font-size: 11px; display: flex; align-items: center; justify-content: space-between; padding: 0 7px 0 3px; white-space: nowrap;
`;
const SpeedSelect = styled(SelectBox)`margin-top: 6px;`;
const SpeedLabel = styled(BigLabel)`margin-top: 12px;`;
const FaceList = styled.div`width: 76px; flex: none; display: flex; flex-direction: column; margin-top: -4px;`;
const FaceRow = styled.div`height: 22px; display: flex; align-items: center; gap: 4px; font-size: 11px; white-space: nowrap;`;
const RibbonEnd = styled.div`margin-left: auto; height: 85px; display: flex; align-items: flex-end; padding: 0 1px 4px 0;`;

const Toolbar = styled.div`
  height: 32px; display: flex; align-items: center; padding-left: 7px; flex: none; border-bottom: 2px solid #9b9b9b;
`;
const ToolText = styled.span`font-size: 11.5px; white-space: nowrap;`;
const ToggleBtn = styled.div`
  width: ${p => p.$w}px; height: 23px; flex: none; margin-left: ${p => p.$m || 0}px; background: #cde5ed;
  display: flex; align-items: center; justify-content: center;
`;
const ToolEnd = styled.div`margin-left: auto; padding-right: 1px; align-self: center;`;

const Main = styled.div`flex: 1; display: flex; min-height: 0;`;
const Side = styled.div`width: 32px; flex: none; background: #dedede; border-right: 2px solid #a9a9a9; display: flex; flex-direction: column; align-items: center;`;
const SideSlot = styled.div`
  flex: none; width: 28px; height: 26px; margin-top: ${p => p.$t}px; display: flex; align-items: center; justify-content: center;
`;
const SideActive = styled.div`
  flex: none; width: 31px; height: 44px; margin: ${p => p.$t}px -1px 0 1px; align-self: flex-start; background: #fff; position: relative; left: 1px;
  border: 1px solid #a9a9a9; border-right: 0; display: flex; align-items: center; justify-content: center;
`;

const Panel = styled.div`
  width: 458px; flex: none; display: flex; flex-direction: column; border-right: 2px solid #b0b0b0; padding: 0 8px 5px 6px; background: #fff;
`;
const PanelHead = styled.div`height: 28px; flex: none; display: flex; align-items: center; justify-content: space-between; padding: 0 8px 0 4px; font-size: 12.2px; color: #222;`;
const MaxIcon = styled.div`width: 12px; height: 11px; border: 1px solid #222; border-top-width: 2px;`;
const TableWrap = styled.div`flex: 1; min-height: 0; border: 1px solid #dcdcdc; padding: 1px 0 1px 0; display: flex; flex-direction: column;`;
const HeadRow = styled.div`
  height: 21px; flex: none; display: grid; grid-template-columns: 201px 99px 50px 90px; background: #f0f0f0; border-bottom: 1px solid #e3e3e3;
`;
const HeadCell = styled.div`
  padding-left: ${p => p.$p || 6}px; line-height: 20px; font-size: 12px; color: #3a3a3a; border-right: 1px solid #dcdcdc;
`;
const Rows = styled.div`flex: 1; min-height: 0; overflow: hidden;`;
const Row = styled.div`
  height: 20px; display: grid; grid-template-columns: 201px 99px 50px 90px;
  background: ${p => (p.$odd ? '#f9f9f9' : '#fff')}; border-bottom: 1px solid #ececec;
`;
const NameCell = styled.div`display: flex; align-items: stretch; border-right: 1px solid #000; min-width: 0;`;
const DataCell = styled.div`
  display: flex; align-items: center; border-right: 1px solid #ececec; padding-left: ${p => p.$p || 0}px;
  background: ${p => (p.$sel ? '#8bc0d0' : 'transparent')}; font-size: 12.5px; color: ${p => p.$c || '#222'};
`;
const Branch = styled.div`
  width: 10px; flex: none; margin-left: 10px; position: relative; border-left: 1px dotted #888;
  height: ${p => (p.$last ? '10px' : '20px')};
  &::after { content: ''; position: absolute; left: 0; right: 1px; top: 9px; border-top: 1px dotted #888; }
`;
const IconBox = styled.div`width: ${p => p.$w}px; flex: none; display: flex; align-items: center; justify-content: center;`;
const NodeText = styled.div`
  flex: ${p => (p.$sel ? 1 : 'none')}; padding-left: ${p => p.$p ?? 3}px; line-height: 19px; font-size: 12.5px; white-space: nowrap;
  color: ${p => p.$c || '#222'}; background: ${p => (p.$sel ? '#8bc0d0' : 'transparent')};
`;
const HScroll = styled.div`height: 15px; flex: none; background: #efefef; display: flex; align-items: center; margin-bottom: 1px;`;
const ScrollEnd = styled.div`width: 17px; flex: none; display: flex; align-items: center; justify-content: center; font: 700 16px/14px "Liberation Sans", sans-serif; color: #444;`;
const Thumb = styled.div`width: 208px; height: 15px; background: #c9c9c9; flex: none;`;
const ScrollTrack = styled.div`flex: 1;`;
const Splitter = styled.div`height: 5px; flex: none; margin-top: 1px; background: #e0e0e0; border: 1px solid #aaa;`;
const Accordion = styled.div`
  height: 24px; flex: none; border-bottom: 2px solid #d5d5d5; display: flex; align-items: center; justify-content: space-between;
  padding: 2px 6px 3px 7px; color: #0e6f90; font-size: 13.5px;
`;

const Right = styled.div`flex: 1; min-width: 0; display: flex; flex-direction: column;`;
const DocTabs = styled.div`height: 20px; flex: none; display: flex; padding-left: 5px; gap: 1px;`;
const DocTab = styled.div`
  width: ${p => p.$w}px; flex: none; display: flex; align-items: center; padding-left: ${p => p.$p}px; gap: 4px; font-size: 12.2px; white-space: nowrap;
  background: ${p => (p.$on ? '#5a9fb9' : 'transparent')}; color: ${p => (p.$on ? '#e9f5f9' : '#222')};
`;
const DocName = styled.span`width: ${p => p.$w}px; flex: none; margin-left: ${p => p.$m || 0}px;`;
const Close = styled.span`color: #fff; font: 700 13px "Liberation Sans", sans-serif; margin-left: 1px;`;
const Viewport = styled.div`
  flex: 1; min-height: 0; position: relative; overflow: hidden; border-top: 2px solid #5a9fb9;
  background: linear-gradient(178deg, #d3ac5a 0%, #dcb460 22%, #e3bc68 48%, #e8c26e 72%, #ebc570 100%);
`;
const Scene = styled.svg`display: block; width: 1421px; height: 815px;`;
const Mark = styled.div`position: absolute; left: 1139px; top: 735px; display: flex; gap: 9px; pointer-events: none;`;
const MarkText = styled.div`display: flex; flex-direction: column; padding-top: 11px;`;
const MarkTitle = styled.div`
  font: 700 42px/42px "Noto Sans CJK SC", "Liberation Sans", sans-serif; color: #f3dfb7; white-space: nowrap; letter-spacing: -.4px;
`;
const MarkUrl = styled.div`
  font: 400 15.5px/16px "Liberation Sans", sans-serif; color: #f2dcaf; letter-spacing: 2.9px; margin-top: 1px; white-space: nowrap;
`;
const Status = styled.div`
  height: 15px; flex: none; border-top: 1px solid #aaa; display: flex; align-items: center; padding-left: 915px; font-size: 11px; line-height: 13px; color: #222;
`;
const StatusIcon = styled.div`margin-left: auto; margin-right: 48px;`;
const Hidden = styled.svg`position: absolute; width: 0; height: 0;`;

/* ---------- data ---------- */
const D = () => <Caret />;
const rowsData = [
  { kind: 'root' },
  { text: '未用项', icons: ['folder'], boxW: [17], p: 2 },
  { text: 'PROGRAM', icons: ['bulb', 'folder'], boxW: [17, 15], p: 3 },
  { text: 'CONTOUR_AREA', icons: ['bulb', 'opIcon'], boxW: [17, 15], p: 3, c: '#7a3fe0', chg: true, check: true, tool: 'MILL', toolC: '#7a3fe0' },
  { text: 'FIXED_CONTOUR', icons: ['bulb', 'opIcon'], boxW: [17, 15], p: 3, check: true, tool: 'MILL' },
  { text: 'CONTOUR_TEXT', icons: ['greenCheck', 'opIcon'], boxW: [17, 15], p: 3, check: true, tool: 'MILL', sel: true, last: true },
];
const emptyRows = Array.from({ length: 30 }, (_, i) => i);

const sideItems = [['sGeom', 25], ['sMirror', 15], ['sCyl', 16]];
const sideAfter = [
  ['sTable', 6], ['sMach', 16], ['sBooks', 17], ['sInfo', 28], ['sDoc', 28], ['sClock', 28], ['sRain', 16], ['sWand', 15], ['sWrench', 18], ['sMachF', 15],
];

const Big = ({ w, n, label, caret, s = 36, frame }) => (
  <BigBtn $w={w}>
    {frame ? <MoreFrame><Ico n={n} s={s} /></MoreFrame> : <BigIcon><Ico n={n} s={s} /></BigIcon>}
    <BigLabel>{label}</BigLabel>
    {caret && <BigCaret><D /></BigCaret>}
  </BigBtn>
);
const Foot = ({ name }) => (
  <GroupFoot>
    <GroupName>{name}</GroupName>
    <FootCaret>{name && <D />}</FootCaret>
  </GroupFoot>
);

const CyanPaths = () => (
  <g fill="none" stroke="#4de8b6">
    <g transform="translate(640 380) scale(.3333)" strokeWidth="6.5" strokeLinejoin="round">
      <path d="M138 50C200 120 300 240 385 320" />
      <path d="M138 50L160 95C190 150 280 240 357 320L302 318L362 450C280 420 170 330 72 243C130 310 230 400 310 460C340 475 370 478 385 485C420 530 430 560 440 580C450 600 480 610 495 610C510 600 505 590 490 565C470 530 455 520 440 500L530 500C570 495 610 490 648 492C620 460 590 425 578 423C570 425 565 445 555 445L440 378L520 358L600 355C590 325 550 290 515 262C505 280 515 290 490 305C460 315 420 320 385 322" />
      <path d="M345 375L425 375L540 452L500 462L405 460C380 440 360 410 345 375M505 462L507 495M490 565L493 625" />
      <path d="M570 508L835 660C845 650 830 610 808 588C840 600 860 630 885 632L1003 640C1000 625 850 550 730 468C750 510 780 530 880 570C960 600 1060 630 1130 710L1130 752M1130 712C1050 690 960 665 888 648C905 670 890 690 900 695L1155 842C1130 830 1000 770 893 712C860 750 820 790 770 805L700 805C660 795 625 780 625 750C610 720 590 700 573 675C620 720 670 755 710 755C760 745 820 710 835 680L700 600C640 580 590 540 570 508" />
      <path d="M768 625L772 682M865 745L868 805M705 805L707 860" />
      <path d="M138 50L225 150M138 50L195 145M72 243L125 290M72 243L105 280" stroke="#0ff" />
    </g>
    <g strokeWidth="2" strokeLinejoin="round">
      <path d="M1030.5 722.7C1060 732 1100 737 1117 737C1140 739 1170 738 1223 733C1235 731 1243 728 1245 724C1245 720 1247 718 1249 718L1282 740C1270 740 1255 741 1225 747C1200 749 1170 749 1117 746C1090 744 1060 737 1030.5 722.7Z" />
      <path d="M1218 747L1267 817C1270 825 1278 829 1282 830L1357 853L1326 835L1276 803L1226 747M1213 748V763M1329 838V851" strokeWidth="1.5" />
      <path d="M1451 839L1528 857L1616 872L1710 883C1730 886 1745 892 1753 897L1745 899L1616 877L1499 858C1480 855 1465 852 1451 839L1456.5 841L1528 857M1512 862V873" strokeWidth="1.8" />
      <path d="M1839 913L1892 902L1920 888M1840 915L1898 904L1920 906M1910 900L1920 899" />
      <path d="M1878.5 922H1920M1880 924L1886 927H1920M1887 923V933" />
      <path d="M1780.5 939L1839 942H1920M1780.5 939C1785 944 1792 948 1801 948H1920M1801 944V949" strokeWidth="2.2" />
    </g>
    <g stroke="#ffc800" strokeWidth="2.5">
      <path d="M748 210L773 532M800 210L825 528M905 210L935 593" />
      <path d="M1183 210L1225 747M1404.5 210L1455 845" />
    </g>
    <path d="M1868 211L1920 216" stroke="#0000ee" strokeWidth="2.5" strokeDasharray="7 8" />
  </g>
);

const Triad = () => (
  <g>
    <polygon points="566,933 587,927 595,933 595,955 572,958 566,952" fill="#cfc6a6" fillOpacity=".8" stroke="#9c9c90" strokeWidth="1" />
    <path d="M573 934V958M566 933L573 934L595 933M563 958L582 936M571 952L580 942" stroke="#a7ad9c" strokeWidth=".8" fill="none" />
    <path d="M563 957L561 925" stroke="#0c2fd8" strokeWidth="3" />
    <polygon points="560.5,916 557,927 564,927" fill="#0c2fd8" />
    <path d="M563 958L598 957" stroke="#d4302a" strokeWidth="3" />
    <polygon points="607,956.5 596,953 596,960" fill="#d4302a" />
    <circle cx="563" cy="958" r="3.6" fill="#e6e6e6" stroke="#888" strokeWidth=".6" />
    <text x="556" y="914" fontSize="11" fontFamily="Liberation Sans" fill="#2a4ad8">Z</text>
    <text x="608" y="960" fontSize="11" fontFamily="Liberation Sans" fill="#d4473c">X</text>
    <text x="574" y="951" fontSize="8" fontFamily="Liberation Sans" fill="#9ec49a">Y</text>
  </g>
);

const LogoMark = () => (
  <Svg width="72" height="84" viewBox="0 0 72 84">
    <polygon points="36,0 70,20 70,64 36,84 2,64 2,20" fill="#b9cdb0" />
    <polygon points="36,0 52,10 36,30 18,20 26,7" fill="#cfd2b2" />
    <polygon points="52,10 70,20 70,64 60,70 58,30" fill="#88b7b4" />
    <polygon points="70,50 70,64 36,84 34,70" fill="#78afae" />
    <polygon points="2,40 20,70 36,84 2,64" fill="#9ec2b0" />
    <polygon points="36,26 54,36 54,54 36,64 18,54 18,36" fill="none" stroke="#ebc570" strokeWidth="2" />
    <polygon points="36,28 50,36 36,44 22,36" fill="#d5d5b6" />
    <polygon points="22,37 35,45 35,62 22,54" fill="#a9c9b8" />
    <polygon points="37,45 50,37 50,54 37,62" fill="#7fb3b0" />
    <path d="M10 62C2 40 14 20 36 16C50 14 60 24 62 38" fill="none" stroke="#ebc570" strokeWidth="1.2" />
  </Svg>
);

export default function App() {
  return (
    <>
      <Global />
      <Hidden aria-hidden="true">
        <defs>
          <linearGradient id="gMill" x1="0" x2="1" y1="0" y2="0"><stop offset="0" stopColor="#2f3f9c" /><stop offset=".45" stopColor="#92a2e6" /><stop offset="1" stopColor="#33449f" /></linearGradient>
          <linearGradient id="gDrill" x1="0" x2="1" y1="0" y2="0"><stop offset="0" stopColor="#8f9dc2" /><stop offset=".5" stopColor="#dfe6f4" /><stop offset="1" stopColor="#7c8ab2" /></linearGradient>
          <linearGradient id="gSteel" x1="0" x2="1" y1="0" y2="0"><stop offset="0" stopColor="#59646e" /><stop offset=".4" stopColor="#dfe6ea" /><stop offset="1" stopColor="#4d5862" /></linearGradient>
          <linearGradient id="gSteelV" x1="0" x2="0" y1="0" y2="1"><stop offset="0" stopColor="#5c6972" /><stop offset=".45" stopColor="#dfe7ea" /><stop offset="1" stopColor="#5f6c75" /></linearGradient>
          <linearGradient id="gWin" x1="0" x2="0" y1="0" y2="1"><stop offset="0" stopColor="#8fb0ea" /><stop offset="1" stopColor="#fff" /></linearGradient>
          <linearGradient id="gRain" x1="0" x2="0" y1="0" y2="1"><stop offset="0" stopColor="#e8202a" /><stop offset=".3" stopColor="#f5e32c" /><stop offset=".55" stopColor="#27c63b" /><stop offset=".8" stopColor="#18b6d8" /><stop offset="1" stopColor="#1b2ad2" /></linearGradient>
          <linearGradient id="gBand" gradientUnits="userSpaceOnUse" x1="499" y1="800" x2="900" y2="1000"><stop offset="0" stopColor="#ead37b" /><stop offset="1" stopColor="#e8c770" /></linearGradient>
          <pattern id="hatch" width="3" height="3" patternUnits="userSpaceOnUse" patternTransform="rotate(-45)"><rect width="3" height="3" fill="#fff" /><rect width="1.6" height="3" fill="#2230b0" /></pattern>
        </defs>
      </Hidden>
      <Page>
        <Shell>
          <TitleBar>
            <TitleQuick>
              <Slot $w={42}><NxMark>NX</NxMark></Slot>
              <VSep />
              <Slot $w={30}><Ico n="save" s={18} /></Slot>
              <VSep />
              <Slot $w={26}><Ico n="undo" s={17} /></Slot>
              <Slot $w={12}><D /></Slot>
              <VSep $m={5} />
              <Slot $w={22}><Ico n="cut" s={16} /></Slot>
              <Slot $w={24}><Ico n="copy" s={16} /></Slot>
              <Slot $w={24}><Ico n="paste" s={16} /></Slot>
              <Slot $w={24}><Ico n="snap" s={18} /></Slot>
              <VSep />
              <Slot $w={24}><Ico n="tool" s={20} /></Slot>
              <Slot $w={16}><D /></Slot>
              <VSep />
              <Slot $w={28}><Ico n="erase" s={17} /></Slot>
              <VSep />
              <Slot $w={26}><Ico n="switchWin" s={18} /></Slot>
              <Slot $w={44}><QuickText>切换窗口</QuickText></Slot>
              <Slot $w={26}><Ico n="win" s={19} /></Slot>
              <Slot $w={26}><QuickText>窗口</QuickText></Slot>
              <Slot $w={10}><D /></Slot>
              <Slot $w={10}><Ico n="mini" s={8} /></Slot>
            </TitleQuick>
            <AppTitle>NX 12 - 加工</AppTitle>
            <Siemens>SIEMENS</Siemens>
            <WinCtl>
              <Slot $w={22}><WinBar /></Slot>
              <Slot $w={23}>
                <Svg width="13" height="13" viewBox="0 0 13 13"><path d="M4 3V1H12V8H9M1 4H9V12H1Z" fill="none" stroke="#222" strokeWidth="1.2" /></Svg>
              </Slot>
              <Slot $w={24}>
                <Svg width="14" height="14" viewBox="0 0 14 14"><path d="M1 1L13 13M13 1L1 13" stroke="#222" strokeWidth="1.4" /></Svg>
              </Slot>
            </WinCtl>
          </TitleBar>

          <TabBar>
            <FileTab>文件(F)</FileTab>
            <Tab $on>主页</Tab>
            {['装配', '曲线', '分析', '视图', '渲染', '工具', '应用模块'].map(t => <Tab key={t}>{t}</Tab>)}
            <TabRight>
              <SearchBox>查找命令<Ico n="mag" s={16} /></SearchBox>
              <Slot $w={26}><Ico n="screen" s={17} /></Slot>
              <Slot $w={26}><Ico n="chev" s={17} /></Slot>
              <Slot $w={26}><Ico n="help" s={16} /></Slot>
              <Slot $w={20}><Ico n="cap" s={17} /></Slot>
              <Slot $w={28}><HelpText>教程</HelpText></Slot>
            </TabRight>
          </TabBar>

          <Ribbon>
            <Group $w={210}>
              <GroupBody $p={6}>
                <Big w={58} n="createTool" label="创建刀具" />
                <Big w={58} n="createGeom" label="创建几何体" />
                <Big w={59} n="createOp" label="创建工序" />
                <SmallStack>
                  <Ico n="sGrid" s={18} />
                  <Ico n="sPlate" s={18} />
                </SmallStack>
              </GroupBody>
              <Foot name="刀片" />
            </Group>
            <Group $w={55}>
              <GroupBody><Big w={55} n="attr" label="属性" caret /></GroupBody>
              <Foot name="操作" />
            </Group>
            <Group $w={311}>
              <GroupBody $p={8}>
                <Big w={52} n="genPath" label="生成刀轨" />
                <Big w={53} n="verify" label="确认刀轨" />
                <Big w={53} n="simulate" label="机床仿真" />
                <Big w={44} n="post" label="后处理" />
                <Big w={58} n="shop" label="车间文档" />
                <Big w={38} n="more" s={20} frame label="更多" caret />
              </GroupBody>
              <Foot name="工序" />
            </Group>
            <Group $w={126}>
              <GroupBody $p={9}>
                <SmallGrid $cols="24px 12px 24px 12px 24px 12px">
                  <Cell><Ico n="dispTool" s={19} /></Cell><Cell><D /></Cell>
                  <Cell><Ico n="dispLayer" s={18} /></Cell><Cell><D /></Cell>
                  <Cell><Ico n="dispCross" s={19} /></Cell><Cell />
                  <Cell $on><Ico n="hatchA" s={20} /></Cell><Cell />
                  <Cell><Ico n="curve" s={18} /></Cell><Cell />
                  <Cell><Ico n="holder" s={19} /></Cell><Cell><D /></Cell>
                  <Cell $on><Ico n="hatchB" s={20} /></Cell><Cell />
                  <Cell><Ico n="circle" s={17} /></Cell><Cell />
                  <Cell><Ico n="line" s={17} /></Cell><Cell><D /></Cell>
                </SmallGrid>
              </GroupBody>
              <Foot name="显示" />
            </Group>
            <Group $w={234}>
              <GroupBody $p={14}>
                <Big w={36} n="play" s={30} label="播放" />
                <Big w={34} n="pause" s={30} label="暂停" />
                <SmallGrid $cols="28px 31px">
                  <Cell><Ico n="prevBar" s={18} /></Cell><Cell><Ico n="nextBar" s={18} /></Cell>
                  <Cell><Ico n="prevDot" s={19} /></Cell><Cell><Ico n="nextDot" s={19} /></Cell>
                  <Cell><Ico n="prev" s={18} /></Cell><Cell />
                </SmallGrid>
                <SpeedCol>
                  <SpeedSelect $w={80}>5<Caret $s={4} /></SpeedSelect>
                  <SpeedLabel>速度</SpeedLabel>
                </SpeedCol>
              </GroupBody>
              <Foot name="动画" />
            </Group>
            <Group $w={136}>
              <GroupBody $p={9}>
                <SmallGrid $cols="24px 26px">
                  <Cell><Ico n="cupLB" s={20} /></Cell><Cell><Ico n="cupNLB" s={20} /></Cell>
                  <Cell><Ico n="cupL" s={20} /></Cell><Cell><Ico n="cupNL" s={20} /></Cell>
                  <Cell><Ico n="cupB" s={20} /></Cell><Cell><Ico n="cupNB" s={20} /></Cell>
                </SmallGrid>
                <Big w={70} n="ipw" s={34} label="显示 3D IPW" caret />
              </GroupBody>
              <Foot name="工件" />
            </Group>
            <Group $w={189}>
              <GroupBody $p={1}>
                <Big w={60} n="layerSet" label="图层设置" />
                <Big w={56} n="layerMove" label="移动至图层" />
                <Big w={68} n="layerCopy" label="复制至图层" />
              </GroupBody>
              <Foot />
            </Group>
            <Group $w={172}>
              <GroupBody $p={2}>
                <Big w={52} n="moveFace" label="移动面" />
                <FaceList>
                  <FaceRow><Ico n="offset" s={16} />偏置区域</FaceRow>
                  <FaceRow><Ico n="replace" s={16} />替换面</FaceRow>
                  <FaceRow><Ico n="deleteF" s={16} />删除面</FaceRow>
                </FaceList>
                <Big w={38} n="morePurple" s={18} frame label="更多" caret />
              </GroupBody>
              <Foot name="同步建模" />
            </Group>
            <RibbonEnd><D /></RibbonEnd>
          </Ribbon>

          <Toolbar>
            <Slot $w={22}><Ico n="menu" s={17} /></Slot>
            <Slot $w={41}><ToolText>菜单(M)</ToolText></Slot>
            <Slot $w={14}><D /></Slot>
            <VSep $m={2} />
            <ToggleBtn $m={9} $w={23}><Ico n="tvA" s={17} /></ToggleBtn>
            <Slot $w={26}><Ico n="tvB" s={17} /></Slot>
            <Slot $w={20}><Ico n="tvC" s={17} /></Slot>
            <Slot $w={30}><Ico n="tvD" s={17} /></Slot>
            <VSep $m={5} />
            <ToggleBtn $m={9} $w={22}><Ico n="tvE" s={17} /></ToggleBtn>
            <Slot $w={26}><Ico n="tvF" s={17} /></Slot>
            <VSep $m={6} />
            <SelectBox $m={12} $w={133}>无选择过滤器<Caret $s={4} /></SelectBox>
            <SelectBox $m={9} $w={140}>整个装配<Caret $s={4} /></SelectBox>
            <Slot $w={32}><Ico n="gA" s={18} /></Slot>
            <Slot $w={22}><Ico n="gB" s={17} /></Slot>
            <Slot $w={18}><Ico n="filterBox" s={16} /></Slot>
            <Slot $w={16}><D /></Slot>
            <Slot $w={26}><Ico n="cUndo" s={18} /></Slot>
            <Slot $w={22}><Ico n="cTool" s={18} /></Slot>
            <Slot $w={28}><Ico n="cDots" s={18} /></Slot>
            <Slot $w={18}><Ico n="cRect" s={17} /></Slot>
            <Slot $w={20}><D /></Slot>
            <Slot $w={20}><Ico n="cWrap" s={18} /></Slot>
            <Slot $w={28}><Ico n="cCube" s={18} /></Slot>
            <VSep $m={5} />
            <Slot $m={8} $w={24}><Ico n="vFit" s={17} /></Slot>
            <Slot $w={24}><Ico n="vPan" s={18} /></Slot>
            <Slot $w={26}><Ico n="vRot" s={18} /></Slot>
            <Slot $w={26}><Ico n="vZoom" s={18} /></Slot>
            <Slot $w={24}><Ico n="vDim" s={18} /></Slot>
            <Slot $w={26}><Ico n="vGrid" s={17} /></Slot>
            <Slot $w={10}><D /></Slot>
            <Slot $w={26}><Ico n="vShade" s={18} /></Slot>
            <Slot $w={10}><D /></Slot>
            <Slot $w={28}><Ico n="vBlue" s={18} /></Slot>
            <Slot $w={10}><D /></Slot>
            <Slot $w={24}><Ico n="vSec" s={18} /></Slot>
            <Slot $w={10}><D /></Slot>
            <VSep $m={10} />
            <ToolEnd><D /></ToolEnd>
          </Toolbar>

          <Main>
            <Side>
              <SideSlot $t={0}><Ico n="gear" s={17} /></SideSlot>
              {sideItems.map(([n, t]) => <SideSlot key={n} $t={t}><Ico n={n} s={26} /></SideSlot>)}
              <SideActive $t={7}><Ico n="sOps" s={27} /></SideActive>
              {sideAfter.map(([n, t]) => <SideSlot key={n} $t={t}><Ico n={n} s={26} /></SideSlot>)}
            </Side>

            <Panel>
              <PanelHead>工序导航器 - 程序顺序<MaxIcon /></PanelHead>
              <TableWrap>
                <HeadRow>
                  <HeadCell>名称</HeadCell>
                  <HeadCell>换刀</HeadCell>
                  <HeadCell>刀轨</HeadCell>
                  <HeadCell>刀具</HeadCell>
                </HeadRow>
                <Rows>
                  {rowsData.map((r, i) => (
                    <Row key={i} $odd={i % 2 === 1}>
                      <NameCell>
                        {r.kind === 'root' ? (
                          <NodeText $p={4}>NC_PROGRAM</NodeText>
                        ) : (
                          <>
                            <Branch $last={r.last} />
                            {r.icons.map((n, k) => (
                              <IconBox key={k} $w={r.boxW[k]}><Ico n={n} s={n === 'greenCheck' ? 14 : n === 'bulb' ? 17 : 16} /></IconBox>
                            ))}
                            <NodeText $p={r.p} $c={r.c} $sel={r.sel}>{r.text}</NodeText>
                          </>
                        )}
                      </NameCell>
                      <DataCell $sel={r.sel} $p={7}>{r.chg && <Ico n="chgTool" s={14} />}</DataCell>
                      <DataCell $sel={r.sel} $p={5}>{r.check && <Ico n="greenCheck" s={14} />}</DataCell>
                      <DataCell $sel={r.sel} $p={5} $c={r.toolC}>{r.tool}</DataCell>
                    </Row>
                  ))}
                  {emptyRows.map(i => (
                    <Row key={i} $odd={(i + 6) % 2 === 1}>
                      <NameCell /><DataCell /><DataCell /><DataCell />
                    </Row>
                  ))}
                </Rows>
                <HScroll>
                  <ScrollEnd>‹</ScrollEnd>
                  <Thumb />
                  <ScrollTrack />
                  <ScrollEnd>›</ScrollEnd>
                </HScroll>
              </TableWrap>
              <Splitter />
              <Accordion>相关性<Svg width="11" height="9" viewBox="0 0 11 9"><path d="M1 1L5.5 8L10 1" fill="none" stroke="#0e7a9b" strokeWidth="2" /></Svg></Accordion>
              <Accordion>细节<Svg width="11" height="9" viewBox="0 0 11 9"><path d="M1 1L5.5 8L10 1" fill="none" stroke="#0e7a9b" strokeWidth="2" /></Svg></Accordion>
            </Panel>

            <Right>
              <DocTabs>
                <DocTab $w={180} $p={2}>
                  <Ico n="partIcon" s={15} />
                  <DocName $w={125}>shenbei_igs-ok(1).prt</DocName>
                  <Ico n="docTab" s={12} />
                </DocTab>
                <DocTab $on $w={172} $p={3}>
                  <Ico n="partIcon" s={16} />
                  <DocName $m={3} $w={108}>3D倒角刻字基础.prt</DocName>
                  <Ico n="docTabW" s={12} />
                  <Close>✕</Close>
                </DocTab>
              </DocTabs>
              <Viewport>
                <Scene viewBox="499 210 1421 815">
                  <polygon points="499,786 620,868 800,960 955,1025 735,1025 499,890" fill="url(#gBand)" />
                  <polygon points="499,890 735,1025 499,1025" fill="#e0b06c" />
                  <path d="M499 786L620 868L800 960L955 1025M499 890L735 1025" stroke="#6a6646" strokeWidth=".9" fill="none" />
                  <CyanPaths />
                  <Triad />
                </Scene>
                <Mark>
                  <LogoMark />
                  <MarkText>
                    <MarkTitle>3D世界网</MarkTitle>
                    <MarkUrl>WWW.3DSJW.COM</MarkUrl>
                  </MarkText>
                </Mark>
              </Viewport>
            </Right>
          </Main>

          <Status>
            拉伸(3)
            <StatusIcon><Ico n="screen" s={13} /></StatusIcon>
          </Status>
        </Shell>
      </Page>
    </>
  );
}
